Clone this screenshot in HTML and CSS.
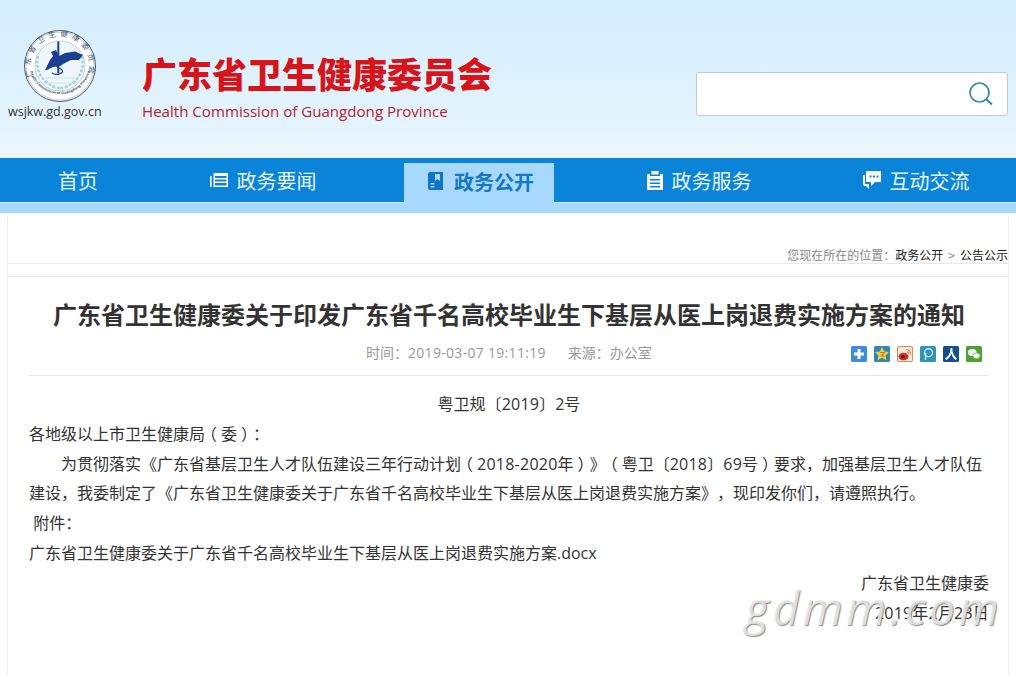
FILE: index.html
```html
<!DOCTYPE html>
<html lang="zh-CN">

<head>
    <meta charset="UTF-8">
    <title>广东省卫生健康委员会</title>
    <link rel="stylesheet" href="styles.css">
</head>

<body>
    <!-- 顶部 -->
    <header class="top">
        <div class="brand-logo">
            <svg class="seal" width="74" height="74" viewBox="0 0 74 74">
                <defs>
                    <path id="ringTop" d="M9 46 A29.500 29.500 0 1 1 65 46"/>
                    <path id="ringBottom" d="M7 42 A31 31 0 0 0 67 42"/>
                </defs>
                <circle cx="37" cy="37" r="35.500" fill="#fff" stroke="#4b5a68" stroke-width="1"/>
                <circle cx="37" cy="37" r="34" fill="none" stroke="#9aa7b3" stroke-width=".6"/>
                <circle cx="37" cy="37" r="25" fill="#eef7fa" stroke="#9db1bf" stroke-width=".6"/>
                <text class="seal-cn"><textPath href="#ringTop" startOffset="50%" text-anchor="middle">广东省卫生健康委员会</textPath></text>
                <text class="seal-en"><textPath href="#ringBottom" startOffset="50%" text-anchor="middle">Health Commission of Guangdong Province</textPath></text>
                <path d="M15 27 Q12 42 22 52 Q30 59 37 59 M59 27 Q62 42 52 52 Q44 59 37 59" fill="none" stroke="#a5d2dc" stroke-width="2.400" stroke-dasharray="3 1.500"/>
                <path d="M22 49 L52 49 M20 54 L54 54" stroke="#bcdde6" stroke-width=".8"/>
                <path d="M22 41 L27 31 L30 27 L28 23 L33 21 L36 27 L42 24 L52 22.500 L60 26 L56 31 L48 31 L42 34 L37 37 L30 38 L24 41 Z" fill="#1d3f92"/>
                <path d="M35.300 12.500 L35.300 44" stroke="#1d3f92" stroke-width="2" fill="none"/>
                <path d="M31 27 Q42 30 37 34 Q30 37 38 40 Q42 43 36 45 Q32 46 29 44" stroke="#1d3f92" stroke-width="1.300" fill="none"/>
            </svg>
            <span class="site-url">wsjkw.gd.gov.cn</span>
        </div>
        <div class="brand-name">
            <h2 class="brand-cn">广东省卫生健康委员会</h2>
            <p class="brand-en">Health Commission of Guangdong Province</p>
        </div>
        <div class="search">
            <svg width="24" height="24" viewBox="0 0 24 24" fill="none" stroke="#2f86b5" stroke-width="1.700">
                <circle cx="10.500" cy="10.500" r="9.500"/>
                <path d="M17.500 17.500 L23 22.500" stroke-width="2"/>
            </svg>
        </div>
    </header>

    <!-- 导航 -->
    <nav class="nav">
        <a class="nav-item">首页</a>
        <a class="nav-item">
            <svg width="18" height="16" viewBox="0 0 18 16" fill="#fff"><path d="M0 4h1.600v11H0zM3.500 1H18v14H3.500zM5 4v2h11.500V4zM5 7.500v2h11.500v-2zM5 11v2.500h11.500V11z" fill-rule="evenodd"/></svg>
            政务要闻
        </a>
        <a class="nav-item active">
            <svg width="15" height="18" viewBox="0 0 15 18" fill="#0f75c4"><path d="M2 0h13v18H2a2 2 0 0 1-2-2V2a2 2 0 0 1 2-2zM7 2v7l2.500-1.800L12 9V2zM2.500 11v1.400h4V11zM2.500 14v1.400h4V14z" fill-rule="evenodd"/></svg>
            政务公开
        </a>
        <a class="nav-item">
            <svg width="16" height="19" viewBox="0 0 16 19" fill="#fff"><path d="M0 3h3v2h10V3h3v16H0zM3 8v1.500h10V8zM3 11.500V13h10v-1.500zM3 15v1.500h10V15zM4.500 0h7v3.500h-7z" fill-rule="evenodd"/></svg>
            政务服务
        </a>
        <a class="nav-item">
            <svg width="18" height="19" viewBox="0 0 18 19" fill="#fff"><path d="M3 0h15v11h-6l-4 4v-4H3zM6.500 4.500v2h2v-2zM10 4.500v2h2v-2zM13.500 4.500v2h2v-2z" fill-rule="evenodd"/><path d="M0 4h2v9h4v5l-3-3H2a2 2 0 0 1-2-2z"/></svg>
            互动交流
        </a>
    </nav>
    <div class="nav-strip"></div>

    <!-- 正文 -->
    <main class="page">
        <div class="crumb">您现在所在的位置<span class="cm">：</span><a>政务公开</a><i>&gt;</i><a>公告公示</a></div>
        <article class="article">
            <h1 class="title">广东省卫生健康委关于印发广东省千名高校毕业生下基层从医上岗退费实施方案的通知</h1>
            <div class="meta">
                <span class="meta-text">时间<span class="cm">：</span><span class="meta-num">2019-03-07 19:11:19</span></span>
                <span class="meta-text">来源<span class="cm">：</span>办公室</span>
                <div class="share">
                    <svg width="16" height="16" viewBox="0 0 16 16"><rect width="16" height="16" rx="1.500" fill="#3f8bdc"/><path d="M6.500 3h3v3.500H13v3H9.500V13h-3V9.500H3v-3h3.500z" fill="#fff"/></svg>
                    <svg width="16" height="16" viewBox="0 0 16 16"><rect width="16" height="16" rx="1.500" fill="#2e87b8"/><path d="M8 1l2.200 4.500 4.800.6-3.500 3.300.9 4.800L8 11.800l-4.400 2.400.9-4.800L1 6.100l4.800-.6z" fill="#f3cd3c"/><path d="M5.800 6.500h4.400L7.500 10h2.800" fill="none" stroke="#c9792a" stroke-width="1.200"/></svg>
                    <svg width="16" height="16" viewBox="0 0 16 16"><rect x=".5" y=".5" width="15" height="15" rx="1.500" fill="#f9e8d8" stroke="#d98a5a"/><ellipse cx="6.500" cy="10.500" rx="5" ry="3.800" fill="#d92b2b"/><ellipse cx="6" cy="10.800" rx="2" ry="1.600" fill="#222"/><path d="M9.500 3.500a4 4 0 0 1 3.800 5M9.800 5.800a1.800 1.800 0 0 1 1.500 2.200" fill="none" stroke="#e88a1e" stroke-width="1.200"/></svg>
                    <svg width="16" height="16" viewBox="0 0 16 16"><rect width="16" height="16" rx="1.500" fill="#2f93b9"/><circle cx="8.500" cy="6.800" r="4" fill="none" stroke="#cfeaf3" stroke-width="1.400"/><path d="M5.500 7v7" stroke="#cfeaf3" stroke-width="1.400"/></svg>
                    <svg width="16" height="16" viewBox="0 0 16 16"><rect width="16" height="16" rx="1.500" fill="#12508f"/><path d="M7.500 2h1.800c0 5 1.500 8 4.700 10.500L12.500 14C10.300 12.200 9 10 8.400 7.600 7.800 10 6 12.500 3.500 14L2 12.500C6 10 7.500 7 7.500 2z" fill="#fff"/></svg>
                    <svg width="16" height="16" viewBox="0 0 16 16"><rect width="16" height="16" rx="1.500" fill="#4da32f"/><ellipse cx="6.300" cy="6.500" rx="4.300" ry="3.500" fill="#fff"/><ellipse cx="10.500" cy="9.800" rx="3.700" ry="3" fill="#fff" stroke="#4da32f" stroke-width=".7"/></svg>
                </div>
            </div>
            <div class="content">
                <p class="doc-no">粤卫规〔<span class="num">2019</span>〕2号</p>
                <p>各地级以上市卫生健康局<span class="pa">（</span>委<span class="pa">）</span><span class="cm">：</span></p>
                <p class="indent">为贯彻落实《广东省基层卫生人才队伍建设三年行动计划<span class="pa">（</span><span class="num">2018-2020</span>年<span class="pa">）</span>》<span class="pa">（</span>粤卫〔<span class="num">2018</span>〕<span class="num">69</span>号<span class="pa">）</span>要求<span class="cm">，</span>加强基层卫生人才队伍建设<span class="cm">，</span>我委制定了《广东省卫生健康委关于广东省千名高校毕业生下基层从医上岗退费实施方案》<span class="cm">，</span>现印发你们<span class="cm">，</span>请遵照执行。</p>
                <p>&nbsp;附件<span class="cm">：</span></p>
                <p>广东省卫生健康委关于广东省千名高校毕业生下基层从医上岗退费实施方案.docx</p>
                <p class="sign">广东省卫生健康委</p>
                <p class="sign sign-date">2019年2月23日</p>
            </div>
        </article>
    </main>

    <!-- 水印 -->
    <div class="watermark">gdmm.com</div>
</body>

</html>
```

FILE: styles.css
```css
/* 页面整体样式 */
body {
    margin: 0;
    width: 1016px;
    height: 675px;
    overflow: hidden;
    position: relative;
    background-color: #fff;
    font-family: "Noto Sans CJK SC", "Liberation Sans", sans-serif;
    color: #333;
    text-spacing-trim: space-all;
}

/* 顶部 */
.top {
    height: 158px;
    box-sizing: border-box;
    padding: 29px 8px 0 8px;
    display: flex;
    background: linear-gradient(#d3edfd, #e9f6fe);
}

.brand-logo {
    width: 94px;
    display: flex;
    flex-direction: column;
    align-items: flex-start;
}

.seal {
    display: block;
    margin-left: 15px;
}

.seal-cn {
    font-size: 7.500px;
    letter-spacing: 4px;
    fill: #3d5a78;
}

.seal-en {
    font-size: 3.800px;
    font-weight: bold;
    fill: #33475c;
    font-family: "Liberation Sans", sans-serif;
}

.site-url {
    font-size: 12.500px;
    line-height: 18px;
    color: #333;
    font-family: "Open Sans", sans-serif;
    white-space: nowrap;
}

.brand-name {
    margin-left: 40px;
    padding-top: 20px;
}

.brand-cn {
    margin: 0;
    font-size: 35px;
    line-height: 48px;
    font-weight: 900;
    color: #d7141a;
    white-space: nowrap;
}

.brand-en {
    margin: 4px 0 0 0;
    font-size: 15.100px;
    line-height: 20px;
    color: #b9202c;
    font-family: "Open Sans", sans-serif;
    white-space: nowrap;
}

.search {
    margin: 43px 0 0 auto;
    width: 312px;
    height: 44px;
    box-sizing: border-box;
    background-color: #fff;
    border: 1px solid #bccdd6;
    border-radius: 3px;
    display: flex;
    justify-content: flex-end;
    align-items: center;
    padding-right: 14px;
}

/* 导航 */
.nav {
    height: 44px;
    display: flex;
    background-color: #0a84d8;
    position: relative;
}

.nav-item {
    width: 150px;
    height: 44px;
    display: flex;
    justify-content: center;
    align-items: center;
    gap: 9px;
    font-size: 20px;
    color: #e6f6fb;
}

.nav-item:nth-child(1) { margin-left: 3px; }
.nav-item:nth-child(2) { margin-left: 35px; }
.nav-item:nth-child(3) { margin-left: 66px; }
.nav-item:nth-child(4) { margin-left: 70px; }
.nav-item:nth-child(5) { margin-left: 67px; }

.nav-item.active {
    height: 50px;
    margin-top: 5px;
    box-sizing: border-box;
    padding: 0 0 14px 4px;
    gap: 11px;
    background-color: #a6d9fd;
    color: #1478c6;
    font-weight: bold;
}

.nav-strip {
    height: 11px;
    background-color: #a6d9fd;
    border-top: 1px solid #d5edfc;
    box-sizing: border-box;
}

/* 内容区 */
.page {
    margin: 0 7px;
    height: 462px;
    box-sizing: border-box;
    border-left: 1px solid #eceef0;
    border-right: 1px solid #eceef0;
}

.crumb {
    height: 51px;
    box-sizing: border-box;
    border-bottom: 1px solid #e8e8e8;
    padding-top: 33px;
    text-align: right;
    font-size: 12px;
    line-height: 18px;
    color: #888;
    margin-bottom: 12px;
}

.crumb a {
    color: #222;
}

.crumb i {
    font-style: normal;
    margin: 0 5px;
}

/* 全角标点：逗号冒号居中 */
.cm {
    font-family: "Noto Sans CJK TC", sans-serif;
    line-height: 1;
}

.pa {
    display: inline-block;
    width: 1em;
    line-height: 1;
    text-indent: 0;
    text-align: center;
    font-feature-settings: "halt";
}

.num {
    letter-spacing: .25px;
}

.article {
    border-top: 1px solid #e8e8e8;
    padding: 0 19px 0 21px;
}

.title {
    margin: 19px 0 0 0;
    font-size: 24px;
    line-height: 36px;
    font-weight: bold;
    text-align: center;
    color: #333;
    white-space: nowrap;
}

.meta {
    margin-top: 11px;
    height: 32px;
    border-bottom: 1px solid #e6e6e6;
    display: flex;
    align-items: flex-start;
    padding-left: 337px;
    gap: 22px;
}

.meta-text {
    font-size: 14px;
    line-height: 18px;
    color: #999;
    white-space: nowrap;
}

.meta-num {
    font-family: "Open Sans", sans-serif;
    letter-spacing: .3px;
}

.share {
    margin-left: auto;
    padding-right: 7px;
    display: flex;
    gap: 7px;
    padding-top: 3px;
}

/* 正文 */
.content {
    padding-top: 14px;
    font-family: "Open Sans", "Noto Sans CJK SC", sans-serif;
    font-size: 16px;
    line-height: 29.800px;
    color: #333;
}

.content p {
    margin: 0;
}

.doc-no {
    text-align: center;
}

.indent {
    text-indent: 32px;
}

.sign {
    text-align: right;
}

.sign-date {
    letter-spacing: .2px;
}

/* 水印 */
.watermark {
    position: absolute;
    left: 745px;
    top: 572px;
    font-family: "Open Sans", sans-serif;
    font-style: italic;
    font-size: 46px;
    line-height: 70px;
    letter-spacing: 3.500px;
    color: rgba(236, 236, 236, 0.85);
    text-shadow: 1px 1px 1px rgba(110, 110, 110, 0.8);
    white-space: nowrap;
}
```
